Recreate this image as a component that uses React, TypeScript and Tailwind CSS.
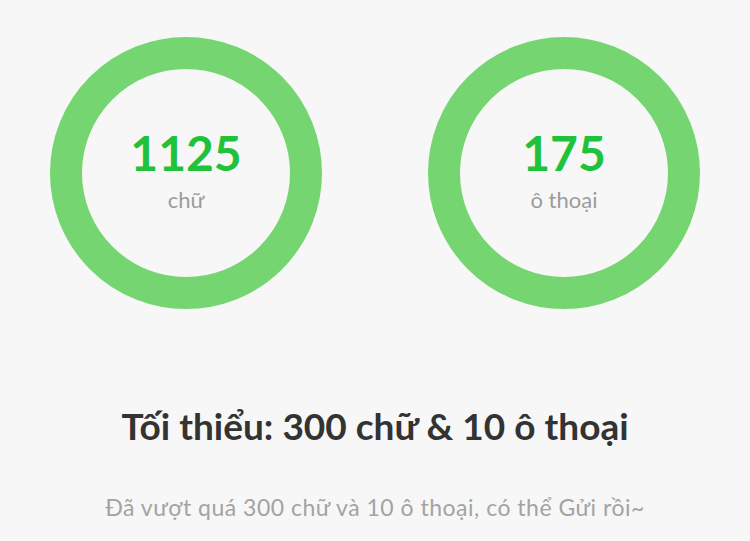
const stats = [
  { value: 1125, label: "chữ" },
  { value: 175, label: "ô thoại" },
];

function Ring({ value, label }: { value: number; label: string }) {
  return (
    <div className="w-[272px] h-[272px] rounded-full border-[32px] border-[#75d671] flex flex-col items-center justify-center">
      <div className="text-[48px] leading-none font-bold text-[#1fc23a] -mt-[6px]">{value}</div>
      <div className="text-[22px] leading-none text-[#9b9b9b] mt-[12px]">{label}</div>
    </div>
  );
}

export default function App() {
  return (
    <div
      className="w-[750px] h-[541px] bg-[#f7f7f7] flex flex-col items-center overflow-hidden"
      style={{ fontFamily: "Lato, 'Noto Sans', sans-serif" }}
    >
      <div className="flex gap-[106px] pt-[37px]">
        {stats.map((s) => (
          <Ring key={s.label} value={s.value} label={s.label} />
        ))}
      </div>
      <h2 className="mt-[98px] text-[37px] leading-none font-bold text-[#333333]">
        Tối thiểu: 300 chữ &amp; 10 ô thoại
      </h2>
      <p className="mt-[52px] text-[23px] leading-none tracking-[0.5px] text-[#a3a3a3]">
        Đã vượt quá 300 chữ và 10 ô thoại, có thể Gửi rồi~
      </p>
    </div>
  );
}
